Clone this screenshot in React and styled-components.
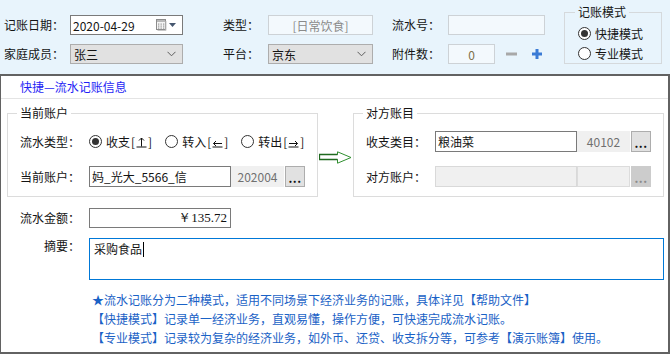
import React from 'react';
import styled, { createGlobalStyle } from 'styled-components';

const GlobalStyle = createGlobalStyle`
  html, body {
    margin: 0;
    padding: 0;
  }
  body {
    width: 670px;
    height: 354px;
    overflow: hidden;
    background: #e8f4fc;
    font-family: "Noto Sans CJK SC", "Noto Sans", sans-serif;
    font-size: 12px;
    color: #141414;
  }
  * {
    box-sizing: border-box;
  }
`;

const Page = styled.div`
  width: 670px;
  height: 354px;
  display: flex;
  flex-direction: column;
`;

/* ---------- header ---------- */

const Header = styled.div`
  height: 74px;
  flex: none;
  display: flex;
  align-items: flex-start;
  padding: 15px 0 0 4px;
  background: #e8f4fc;
`;

const FieldCol = styled.div`
  display: grid;
  grid-template-columns: ${p => p.$label}px ${p => p.$ctrl}px;
  grid-auto-rows: 20px;
  row-gap: 9px;
  align-items: center;
  margin-right: ${p => p.$gap}px;
`;

const Label = styled.span`
  white-space: nowrap;
  line-height: 20px;
`;

const DateBox = styled.div`
  height: 20px;
  display: flex;
  align-items: center;
  justify-content: space-between;
  padding: 0 6px 0 2px;
  background: #fff;
  border: 1px solid #7a7a7a;
`;

const ComboBox = styled.div`
  height: 20px;
  display: flex;
  align-items: center;
  justify-content: space-between;
  padding: 0 6px 0 3px;
  background: #e1e1e1;
  border: 1px solid #adadad;
`;

const ReadBox = styled.div`
  width: ${p => p.$w}px;
  height: 20px;
  display: flex;
  align-items: center;
  justify-content: center;
  background: #f3f9fd;
  border: 1px solid #cdd2d6;
  color: ${p => p.$color || '#8a8a8a'};
`;

const AttachRow = styled.div`
  display: flex;
  align-items: center;
`;

const StepIcon = styled.svg`
  margin-left: ${p => p.$ml}px;
  flex: none;
`;

const ModeGroup = styled.fieldset`
  width: 98px;
  height: 60px;
  margin: -11px 0 0 0;
  padding: 4px 0 0 13px;
  border: 1px solid #d5d9dc;
  display: flex;
  flex-direction: column;
  gap: 2px;
`;

const Legend = styled.legend`
  margin-left: -3px;
  padding: 0 3px;
  line-height: 16px;
`;

const RadioItem = styled.span`
  display: inline-flex;
  align-items: center;
  gap: 4px;
  height: 18px;
  white-space: nowrap;
`;

const RadioDot = styled.span`
  width: 13px;
  height: 13px;
  flex: none;
  border-radius: 50%;
  border: 1px solid #333;
  background: #fff;
  display: inline-flex;
  align-items: center;
  justify-content: center;
  &::after {
    content: '';
    width: 7px;
    height: 7px;
    border-radius: 50%;
    background: ${p => (p.$on ? '#333' : 'transparent')};
  }
`;

/* ---------- main panel ---------- */

const Panel = styled.div`
  flex: 1;
  display: flex;
  flex-direction: column;
  background: #fff;
  border: 2px solid #626262;
  border-left-width: 1px;
  overflow: hidden;
`;

const TitleBar = styled.div`
  height: 23px;
  flex: none;
  line-height: 21px;
  padding-left: 19px;
  color: #1f1ff5;
  border-bottom: 1px solid #e4e4e4;
`;

const GroupsRow = styled.div`
  display: flex;
  align-items: flex-start;
  margin-top: 6px;
  padding-left: 6px;
`;

const Group = styled.fieldset`
  width: 311px;
  margin: 0;
  padding: 10px 0 9px 12px;
  border: 1px solid #dcdcdc;
  display: flex;
  flex-direction: column;
  gap: 14px;
`;

const FormRow = styled.div`
  display: flex;
  align-items: ${p => p.$top ? 'flex-start' : 'center'};
  height: ${p => p.$h || 21}px;
  margin-top: ${p => p.$mt || 0}px;
  padding-left: ${p => p.$pl || 0}px;
  flex: none;
`;

const RowLabel = styled.span`
  width: 69px;
  flex: none;
  text-align: right;
  padding-right: 9px;
  white-space: nowrap;
  line-height: ${p => p.$lh || 20}px;
`;

const RadioSet = styled.div`
  display: flex;
  align-items: center;
  gap: 13px;
`;

const RadioText = styled.span`
  display: inline-flex;
  align-items: center;
`;

const Bracket = styled.span`
  display: inline-flex;
  align-items: center;
  gap: 1px;
  margin-left: 1px;
`;

const TextBox = styled.div`
  width: ${p => p.$w || 142}px;
  height: ${p => p.$h || 21}px;
  flex: none;
  display: flex;
  align-items: center;
  justify-content: ${p => (p.$right ? 'flex-end' : 'flex-start')};
  padding: 0 3px 0 2px;
  background: ${p => (p.$disabled ? '#f0f0f0' : '#fff')};
  border: 1px solid ${p => (p.$disabled ? '#d9d9d9' : '#7a7a7a')};
  white-space: nowrap;
`;

const CodeBox = styled.div`
  width: 53px;
  height: ${p => p.$h || 21}px;
  flex: none;
  display: flex;
  align-items: center;
  justify-content: center;
  background: #f0f0f0;
  border: 1px solid ${p => (p.$disabled ? '#dcdcdc' : '#f0f0f0')};
  color: #707070;
`;

const DotsButton = styled.div`
  width: 20px;
  height: ${p => p.$h || 21}px;
  flex: none;
  margin-left: 1px;
  display: flex;
  align-items: flex-end;
  justify-content: center;
  padding-bottom: 2px;
  line-height: 12px;
  letter-spacing: 0.5px;
  background: ${p => (p.$disabled ? '#cccccc' : '#e1e1e1')};
  border: 1px solid ${p => (p.$disabled ? '#cccccc' : '#adadad')};
  color: ${p => (p.$disabled ? '#8a8a8a' : '#111')};
  font-weight: bold;
`;

const ArrowCell = styled.div`
  width: 35px;
  flex: none;
  align-self: center;
  margin-top: 12px;
  display: flex;
  justify-content: center;
`;

const Amount = styled.span`
  font-family: "Liberation Serif", serif;
  font-size: 13px;
  color: #111;
`;

const Memo = styled.div`
  width: 575px;
  height: 42px;
  flex: none;
  padding: 2px 4px;
  line-height: 16px;
  border: 1px solid #0078d7;
  background: #fff;
  display: flex;
  align-items: flex-start;
`;

const Caret = styled.span`
  width: 1px;
  height: 15px;
  margin: 1px 0 0 1px;
  background: #000;
`;

const Info = styled.div`
  margin-top: 10px;
  padding-left: 91px;
  line-height: 19px;
  color: #1a62c6;
  white-space: nowrap;
`;

/* ---------- drawings ---------- */

const CalendarIcon = () => (
  <svg width="20" height="12" viewBox="0 0 20 12">
    <rect x="0.5" y="0.5" width="9" height="10" fill="#f4f4f4" stroke="#8c8c8c" />
    <rect x="1" y="1" width="8" height="2" fill="#b8b8b8" />
    {[2, 4.5, 7].map(x =>
      [4.5, 6.5, 8.5].map(y => <rect key={x + '-' + y} x={x} y={y} width="1.3" height="1.2" fill="#9a9a9a" />)
    )}
    <path d="M10 2 V11.5 H1.5" stroke="#c8c8c8" fill="none" />
    <path d="M13 4 H20 L16.5 8 Z" fill="#45566f" />
  </svg>
);

const Chevron = () => (
  <svg width="9" height="6" viewBox="0 0 9 6">
    <polyline points="0.5,0.8 4.5,4.8 8.5,0.8" fill="none" stroke="#5c5c5c" strokeWidth="1" />
  </svg>
);

const DirGlyph = ({ dir }) => (
  <svg width="11" height="12" viewBox="0 0 11 12">
    <line x1="0.5" y1="11" x2="10.5" y2="11" stroke="#111" />
    {dir === 'up' && (
      <g stroke="#111" fill="none">
        <line x1="5.5" y1="10.5" x2="5.5" y2="2" />
        <polyline points="3,4.5 5.5,2 8,4.5" />
      </g>
    )}
    {dir === 'left' && (
      <g stroke="#111" fill="none">
        <line x1="1.5" y1="7.5" x2="10" y2="7.5" />
        <polyline points="4,5 1.5,7.5 4,10" />
      </g>
    )}
    {dir === 'right' && (
      <g stroke="#111" fill="none">
        <line x1="1" y1="7.5" x2="9.5" y2="7.5" />
        <polyline points="7,5 9.5,7.5 7,10" />
      </g>
    )}
  </svg>
);

const FlowArrow = () => (
  <svg width="33" height="13" viewBox="0 0 33 13">
    <polygon
      points="0.5,3.5 18.5,3.5 18.5,0.8 32,6.5 18.5,12.2 18.5,8.5 0.5,8.5"
      fill="#fff"
      stroke="#2f8f2f"
      strokeWidth="1"
    />
    <polyline points="18.5,3.5 0.5,3.5 0.5,8.5 18.5,8.5" fill="none" stroke="#1f6a1f" strokeWidth="1.3" />
  </svg>
);

const Radio = ({ on, children }) => (
  <RadioItem>
    <RadioDot $on={on} />
    {children}
  </RadioItem>
);

const FlowRadio = ({ on, text, dir }) => (
  <Radio on={on}>
    <RadioText>
      {text}
      <Bracket>
        <span>[</span>
        <DirGlyph dir={dir} />
        <span>]</span>
      </Bracket>
    </RadioText>
  </Radio>
);

export default function App() {
  return (
    <Page>
      <GlobalStyle />
      <Header>
        <FieldCol $label={66} $ctrl={113} $gap={40}>
          <Label>记账日期：</Label>
          <DateBox>
            <span>2020-04-29</span>
            <CalendarIcon />
          </DateBox>
          <Label>家庭成员：</Label>
          <ComboBox>
            <span>张三</span>
            <Chevron />
          </ComboBox>
        </FieldCol>

        <FieldCol $label={45} $ctrl={105} $gap={19}>
          <Label>类型：</Label>
          <ReadBox $w={105}>[日常饮食]</ReadBox>
          <Label>平台：</Label>
          <ComboBox>
            <span>京东</span>
            <Chevron />
          </ComboBox>
        </FieldCol>

        <FieldCol $label={56} $ctrl={97} $gap={19}>
          <Label>流水号：</Label>
          <ReadBox $w={97} />
          <Label>附件数：</Label>
          <AttachRow>
            <ReadBox $w={47} $color="#7d7048">0</ReadBox>
            <StepIcon $ml={11} width="11" height="4" viewBox="0 0 11 4">
              <rect x="0" y="0.5" width="11" height="3" fill="#a8a8a8" />
            </StepIcon>
            <StepIcon $ml={15} width="10" height="10" viewBox="0 0 10 10">
              <rect x="0" y="3.5" width="10" height="3" fill="#3a7bd5" />
              <rect x="3.5" y="0" width="3" height="10" fill="#3a7bd5" />
            </StepIcon>
          </AttachRow>
        </FieldCol>

        <ModeGroup>
          <Legend>记账模式</Legend>
          <Radio on>快捷模式</Radio>
          <Radio>专业模式</Radio>
        </ModeGroup>
      </Header>

      <Panel>
        <TitleBar>快捷—流水记账信息</TitleBar>

        <GroupsRow>
          <Group>
            <Legend>当前账户</Legend>
            <FormRow>
              <RowLabel>流水类型：</RowLabel>
              <RadioSet>
                <FlowRadio on text="收支" dir="up" />
                <FlowRadio text="转入" dir="left" />
                <FlowRadio text="转出" dir="right" />
              </RadioSet>
            </FormRow>
            <FormRow>
              <RowLabel>当前账户：</RowLabel>
              <TextBox>妈_光大_5566_信</TextBox>
              <CodeBox>202004</CodeBox>
              <DotsButton>...</DotsButton>
            </FormRow>
          </Group>

          <ArrowCell>
            <FlowArrow />
          </ArrowCell>

          <Group>
            <Legend>对方账目</Legend>
            <FormRow>
              <RowLabel>收支类目：</RowLabel>
              <TextBox>粮油菜</TextBox>
              <CodeBox>40102</CodeBox>
              <DotsButton>...</DotsButton>
            </FormRow>
            <FormRow>
              <RowLabel>对方账户：</RowLabel>
              <TextBox $disabled />
              <CodeBox $disabled />
              <DotsButton $disabled>...</DotsButton>
            </FormRow>
          </Group>
        </GroupsRow>

        <FormRow $mt={11} $h={20} $pl={19}>
          <RowLabel>流水金额：</RowLabel>
          <TextBox $h={20} $right>
            <Amount>￥135.72</Amount>
          </TextBox>
        </FormRow>

        <FormRow $mt={10} $h={42} $pl={19} $top>
          <RowLabel $lh={16}>摘要：</RowLabel>
          <Memo>
            <span>采购食品</span>
            <Caret />
          </Memo>
        </FormRow>

        <Info>
          <div>★流水记账分为二种模式，适用不同场景下经济业务的记账，具体详见【帮助文件】</div>
          <div>【快捷模式】记录单一经济业务，直观易懂，操作方便，可快速完成流水记账。</div>
          <div>【专业模式】记录较为复杂的经济业务，如外币、还贷、收支拆分等，可参考【演示账簿】使用。</div>
        </Info>
      </Panel>
    </Page>
  );
}
